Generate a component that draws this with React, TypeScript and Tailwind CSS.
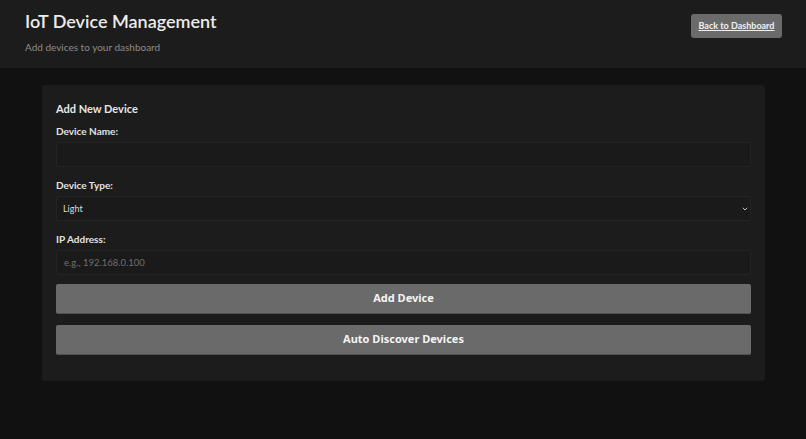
import { ChevronDown } from 'lucide-react';

const FONT = { fontFamily: 'Lato, "Noto Sans", sans-serif' };
const BTN_FONT = { fontFamily: '"Noto Sans", "Open Sans", sans-serif' };

function Field({ label, children }: { label: string; children: React.ReactNode }) {
  return (
    <div className="flex flex-col">
      <label className="text-[10px] leading-[14px] font-bold text-[#e2e2e2]">{label}</label>
      <div className="mt-[4px]">{children}</div>
    </div>
  );
}

export default function App() {
  return (
    <div className="min-h-[439px] bg-[#111111] text-[#e6e6e6]" style={FONT}>
      {/* Header */}
      <header className="h-[68px] bg-[#1c1c1c] flex items-start justify-between pl-[25px] pr-[24px]">
        <div className="flex flex-col">
          <h1 className="mt-[9px] text-[18px] leading-[25px] font-semibold text-[#ececec]">IoT Device Management</h1>
          <p className="mt-[6px] text-[10px] leading-[14px] text-[#8c8c8c]">Add devices to your dashboard</p>
        </div>
        <button
          type="button"
          className="mt-[14px] h-[24px] w-[91px] rounded-[3px] bg-[#6b6b6b] text-[9px] font-bold text-[#f0f0f0] underline"
        >
          Back to Dashboard
        </button>
      </header>

      {/* Card */}
      <main className="pl-[42px] pr-[41px] pt-[17px]">
        <section className="rounded-[3px] bg-[#1c1c1c] px-[14px] pt-[16px] pb-[26px]">
          <h2 className="text-[11px] leading-[16px] font-bold text-[#e6e6e6] mb-[7px]">Add New Device</h2>

          <div className="flex flex-col gap-[11px]">
            <Field label="Device Name:">
              <input
                type="text"
                className="block w-full h-[25px] rounded-[2px] border border-[#242424] bg-[#1a1a1a] px-[7px] text-[9px] text-[#ddd] outline-none"
              />
            </Field>

            <Field label="Device Type:">
              <div className="relative">
                <select className="block w-full h-[25px] appearance-none rounded-[2px] border border-[#242424] bg-[#1a1a1a] px-[6px] text-[9px] text-[#dcdcdc] outline-none">
                  <option>Light</option>
                  <option>Thermostat</option>
                  <option>Sensor</option>
                </select>
                <ChevronDown
                  size={8}
                  strokeWidth={3}
                  className="pointer-events-none absolute right-[2px] top-[9px] text-[#bdbdbd]"
                />
              </div>
            </Field>

            <Field label="IP Address:">
              <input
                type="text"
                placeholder="e.g., 192.168.0.100"
                className="block w-full h-[25px] rounded-[2px] border border-[#242424] bg-[#1a1a1a] px-[7px] text-[9.5px] text-[#ddd] placeholder:text-[#6f6f6f] outline-none"
              />
            </Field>
          </div>

          <div className="mt-[9px] flex flex-col gap-[11px]" style={BTN_FONT}>
            <button
              type="button"
              className="h-[30px] w-full rounded-[2px] bg-[#6a6a6a] border-b border-[#525252] text-[11px] font-bold text-[#f4f4f4]"
            >
              Add Device
            </button>
            <button
              type="button"
              className="h-[30px] w-full rounded-[2px] bg-[#6a6a6a] border-b border-[#525252] text-[11px] font-bold text-[#f4f4f4]"
            >
              Auto Discover Devices
            </button>
          </div>
        </section>
      </main>
    </div>
  );
}
